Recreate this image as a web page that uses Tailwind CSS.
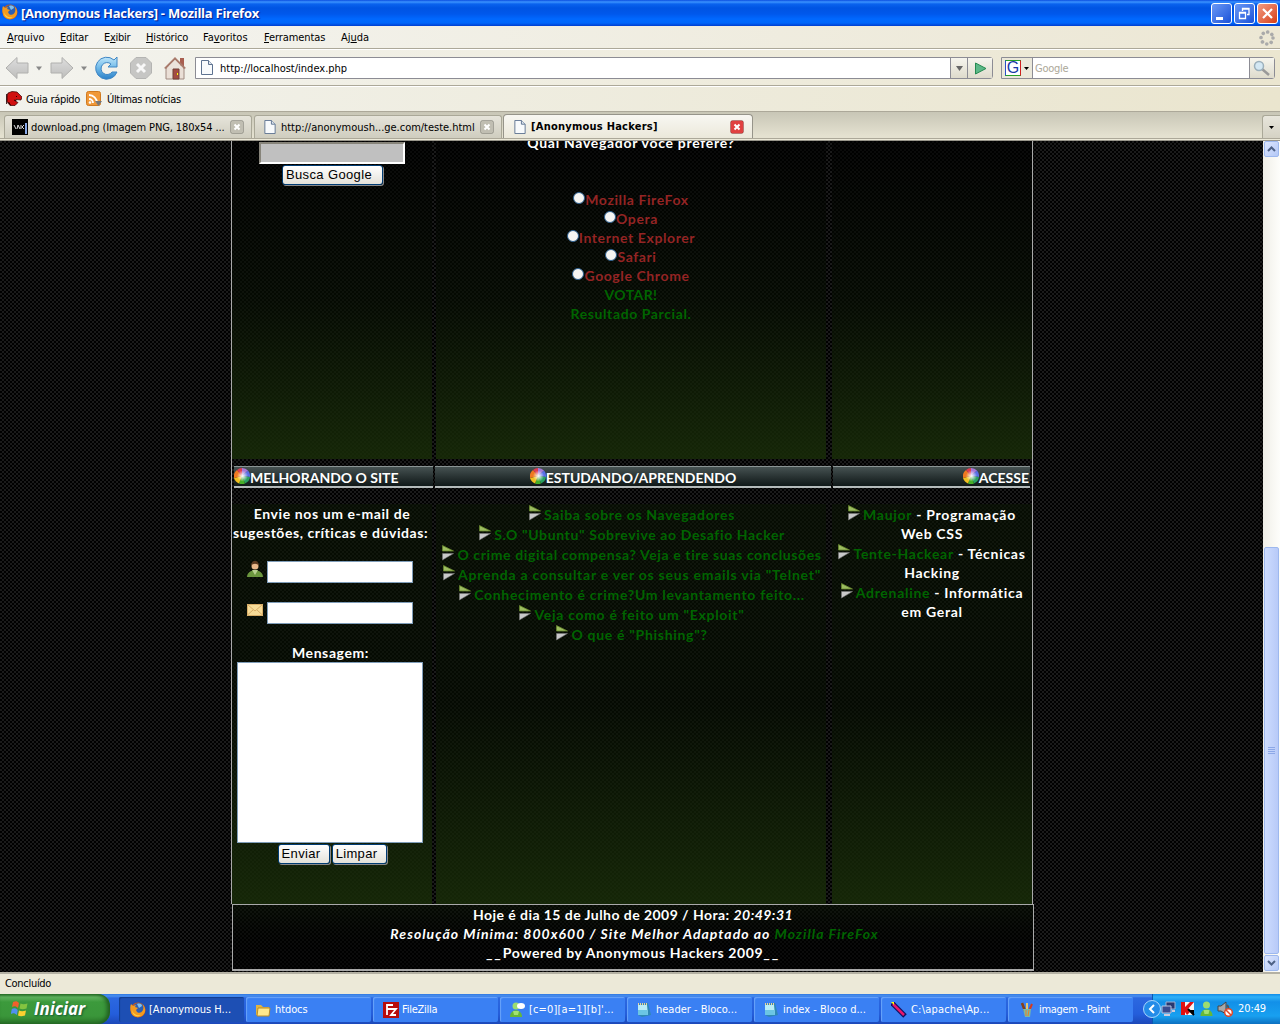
<!DOCTYPE html>
<html lang="pt-BR">
<head>
<meta charset="utf-8">
<title>[Anonymous Hackers] - Mozilla Firefox</title>
<script src="https://cdn.jsdelivr.net/npm/@tailwindcss/browser@4"></script>
</head>
<body class="w-[1280px] h-[1024px] overflow-hidden bg-black flex flex-col font-['DejaVu_Sans_Condensed','Noto_Sans',sans-serif] text-[11px] leading-[14px] text-black whitespace-nowrap">
<svg class="absolute w-0 h-0">
  <defs>
    <radialGradient id="shine"><stop offset="0" stop-color="#fff"/><stop offset=".25" stop-color="#fff" stop-opacity=".7"/><stop offset=".8" stop-color="#fff" stop-opacity="0"/></radialGradient>
    <linearGradient id="blue" x2="0" y2="1"><stop offset="0" stop-color="#bfe6fa"/><stop offset=".5" stop-color="#6fb9e8"/><stop offset="1" stop-color="#2a80c8"/></linearGradient>
    <linearGradient id="grey" x2="0" y2="1"><stop offset="0" stop-color="#dedede"/><stop offset="1" stop-color="#bdbdbb"/></linearGradient>
  </defs>
  <symbol id="arrow" viewBox="0 0 12 16"><path d="M0.5 .5L11.500 6H.5z" fill="#9cbc60" stroke="#66852c" stroke-width=".8"/><path d="M.5 8.500h11L.5 15z" fill="#c9c9c9" stroke="#777" stroke-width=".6"/></symbol>
  <symbol id="wheel" viewBox="0 0 16 16"><path d="M8 8V0A8 8 0 0 1 14 2.600z" fill="#a678d8"/><path d="M8 8l6-5.400A8 8 0 0 1 16 9z" fill="#5a6ee6"/><path d="M8 8l8 1a8 8 0 0 1-5 6.400z" fill="#28a060"/><path d="M8 8l3 7.400A8 8 0 0 1 5 15.400z" fill="#46ae28"/><path d="M8 8l-3 7.400A8 8 0 0 1 0 10z" fill="#f0c020"/><path d="M8 8L0 10A8 8 0 0 1 3 2z" fill="#f07820"/><path d="M8 8L3 2A8 8 0 0 1 8 0z" fill="#e03c50"/><circle cx="8.500" cy="8" r="7" fill="url(#shine)"/></symbol>
  <symbol id="fox" viewBox="0 0 16 16"><circle cx="8" cy="8" r="7.500" fill="#d65a0c"/><circle cx="8.500" cy="6.500" r="5.500" fill="#2c5fb4"/><path d="M7 2c3-1 5 0 5 2L9 6z" fill="#7ec0ee"/><path d="M1 2l2 2 3-1-1 2 3 1-2 2 1 2c3 2 5 0 6-2 1-3 0-5-1-6 4 3 4 8 1 11-4 4-11 2-12-3C0 7 0 4 1 2z" fill="#f39a1e"/><path d="M2 8c1 4 5 6 9 5-4 3-9 0-9-5z" fill="#fbd24b"/></symbol>
  <symbol id="page" viewBox="0 0 12 15"><path d="M.5.5h7l4 4v10H.5z" fill="#f8fafc" stroke="#5d7290"/><path d="M7.500.5v4h4" fill="#dfe6ee" stroke="#5d7290"/></symbol>
  <symbol id="close" viewBox="0 0 14 14"><rect x=".5" y=".5" width="13" height="13" rx="2" fill="currentColor" stroke="#0003"/><path d="M4.500 4.500l5 5m0-5l-5 5" stroke="#fff" stroke-width="2"/></symbol>
  <symbol id="note" viewBox="0 0 16 16"><path d="M2 2l10-1 3 12-9 2-4-2z" fill="#2f88b4"/><path d="M2 3h9l1 10H2z" fill="#b9ecf8"/><path d="M2 8h9.500l.5 5H2z" fill="#6bc5e4"/><path d="M2 2h10" stroke="#eed49a" stroke-width="2" stroke-dasharray="1 1"/></symbol>
  <symbol id="buddy" viewBox="0 0 14 16"><circle cx="7" cy="4" r="3.500" fill="#9cdc70"/><path d="M1 15c0-9 12-9 12 0z" fill="#66b838"/><path d="M4 9h6l-1 4H5z" fill="#a2e272"/></symbol>
</svg>

<!-- Title bar -->
<header class="h-[26px] shrink-0 flex items-center pl-[2px] pr-[2px] bg-linear-[180deg,#0a4de0_0,#3b93ff_2px,#0a62ee_4px,#0054e3_8px,#0058ec_14px,#0068ff_19px,#0066fa_23px,#003dcf_26px]">
  <svg class="w-4 h-4 mb-[3px]"><use href="#fox"/></svg>
  <h1 class="ml-[3px] font-['Open_Sans',sans-serif] font-bold text-[13px] tracking-[-0.27px] text-white [text-shadow:1px_1px_1px_#0a1883]">[Anonymous Hackers] - Mozilla Firefox</h1>
  <div class="ml-auto flex gap-[2px]">
    <span class="w-[21px] h-[21px] rounded-[3px] border border-white bg-linear-to-br from-[#6b98f5] to-[#1a50d8] flex items-end pl-1 pb-[3px]"><i class="w-[7px] h-[3px] bg-white"></i></span>
    <span class="w-[21px] h-[21px] rounded-[3px] border border-white bg-linear-to-br from-[#6b98f5] to-[#1a50d8]"><svg class="w-[19px] h-[19px]" fill="none" stroke="#fff" stroke-width="1.300"><path d="M7.500 7V4.500h6.500v6h-2M7 5h7"/><path d="M4.500 8.500v6h6v-6zM4.500 9h6"/></svg></span>
    <span class="w-[21px] h-[21px] rounded-[3px] border border-white bg-linear-to-br from-[#f09a80] to-[#d63a08]"><svg class="w-[19px] h-[19px]" stroke="#fff" stroke-width="2.200"><path d="M5 5l9 9m0-9l-9 9"/></svg></span>
  </div>
</header>

<!-- Menu bar -->
<nav class="h-[23px] shrink-0 border-b border-[#aca899] bg-linear-to-r from-[#f4f4f0] to-[#ece7d4] flex items-center pl-[7px] pr-[5px] pt-px">
  <span class="w-[53px] tracking-[-0.05px]"><u>A</u>rquivo</span><span class="w-[44px] tracking-[-0.2px]"><u>E</u>ditar</span><span class="w-[42px] tracking-[-0.3px]">E<u>x</u>ibir</span><span class="w-[57px] tracking-[-0.15px]"><u>H</u>istórico</span><span class="w-[61px]">Fa<u>v</u>oritos</span><span class="w-[77px] tracking-[-0.1px]"><u>F</u>erramentas</span><span>Aj<u>u</u>da</span>
  <svg class="ml-auto w-4 h-4" fill="none" stroke="#aaa" stroke-width="3.600" stroke-linecap="round"><circle cx="8" cy="8" r="6" stroke-dasharray="0.010 4.702"/></svg>
</nav>

<!-- Navigation toolbar -->
<div class="h-[37px] shrink-0 border-t border-t-white border-b border-b-[#aca899] bg-linear-to-r from-[#f3f3ee] to-[#ebe6d0] flex items-center pl-[5px] pr-[5px]">
  <svg class="w-[24px] h-[24px]" viewBox="0 0 24 24"><path d="M1 12L12 1.500V7h11v10H12v5.500z" fill="url(#grey)" stroke="#b0b0ae"/></svg>
  <svg class="w-[21px] h-[24px]"><path d="M7 10.500h6l-3 4z" fill="#888"/></svg>
  <svg class="w-[24px] h-[24px]" viewBox="0 0 24 24"><path d="M23 12L12 1.500V7H1v10h11v5.500z" fill="url(#grey)" stroke="#b0b0ae"/></svg>
  <svg class="w-[21px] h-[24px]"><path d="M7 10.500h6l-3 4z" fill="#888"/></svg>
  <svg class="w-[24px] h-[24px]" viewBox="0 0 24 24"><path d="M19 4l3-3v10H13l3-3a6 6 0 1 0 1 8h5A11 11 0 1 1 19 4z" fill="url(#blue)" stroke="#3f86c4"/></svg>
  <svg class="w-[24px] h-[24px] ml-[10px]" viewBox="0 0 24 24"><path d="M7 1.500h10L22.500 7v10L17 22.500H7L1.500 17V7z" fill="#c6c6c4" stroke="#b4b4b2"/><path d="M8 8l8 8m0-8l-8 8" stroke="#f8f8f8" stroke-width="3"/></svg>
  <svg class="w-[24px] h-[24px] ml-[10px]" viewBox="0 0 24 24"><path d="M17 2h4v8h-4z" fill="#a95f50"/><path d="M3 11h18v12H3z" fill="#eadfd6" stroke="#a08a80"/><path d="M12 1L1 12l2 1 9-9 9 9 2-1z" fill="#a97b6c"/><path d="M12 4l8 8H4z" fill="#ece4dc"/><path d="M10 13h6v10h-6z" fill="#a34b42" stroke="#714038"/><path d="M14 17h1v2h-1z" fill="#ff0"/></svg>
  <div class="ml-[8px] w-[798px] h-[22px] border border-[#8c8c94] rounded-r-[3px] bg-white flex items-center pl-[5px]">
    <svg class="w-[12px] h-[15px]"><use href="#page"/></svg>
    <span class="ml-[7px] pt-[2px]">http://localhost/index.php</span>
    <span class="ml-auto w-[17px] h-5 border-l border-[#8c8c94] bg-linear-to-b from-[#f6f5ee] to-[#dedbcc]"><svg class="w-4 h-5"><path d="M5 8h7l-3.500 5z" fill="#666"/></svg></span>
    <span class="w-[25px] h-5 border-l border-[#8c8c94] bg-linear-to-b from-[#f6f5ee] to-[#dedbcc]"><svg class="w-6 h-5"><path d="M7.500 5v11L18 10.500z" fill="#5cb888" stroke="#258a50"/></svg></span>
  </div>
  <div class="ml-[8px] w-[274px] h-[22px] border border-[#8c8c94] rounded-r-[3px] bg-white flex items-center">
    <span class="w-[31px] h-5 bg-[#ebe8da] border-r border-[#8c8c94] flex items-center"><b class="ml-[3px] w-4 h-4 bg-white border border-t-[#28a028] border-l-[#2a50c8] border-r-[#d02020] border-b-[#28a028] font-['Liberation_Sans',sans-serif] font-normal text-[16px] leading-[14px] text-[#1838a8] text-center">G</b><svg class="w-[10px] h-4"><path d="M3 7h5L5.500 10z"/></svg></span>
    <span class="ml-[2px] pt-[2px] tracking-[-0.25px] text-[#aca899]">Google</span>
    <span class="ml-auto w-[25px] h-5 border-l border-[#8c8c94] bg-linear-to-b from-[#f6f5ee] to-[#dedbcc]"><svg class="w-6 h-5"><path d="M12 11l7 6" stroke="#999" stroke-width="2.500"/><circle cx="9" cy="8" r="4.500" fill="#d4e8f4" stroke="#9cb0bc" stroke-width="1.500"/></svg></span>
  </div>
</div>

<!-- Bookmarks toolbar -->
<div class="h-[25px] shrink-0 border-t border-white bg-linear-to-r from-[#f2f2ec] to-[#eae5ce] flex items-center pl-[6px]">
  <svg class="w-[16px] h-[16px]" viewBox="0 0 16 16"><path d="M1 5l1-3 4-1.500 5 .5 5 5-1 3-5-.5 0 2 2 1-3 3-5 0-3-4z" fill="#d01010" stroke="#300" stroke-width=".7"/><path d="M.7 3v10M2.500 11l2 3M10 5l1 1M8 9l2 1" stroke="#200"/></svg>
  <span class="ml-[4px] pt-[2px] w-[60px] tracking-[-0.3px]">Guia rápido</span>
  <svg class="w-[17px] h-[16px]"><rect x=".5" y=".5" width="14" height="14" rx="2" fill="#f09838" stroke="#d07a20"/><path d="M3 8a4 4 0 0 1 4 4M3 4a8 8 0 0 1 8 8" fill="none" stroke="#fff" stroke-width="1.800"/><circle cx="4" cy="11.500" r="1.300" fill="#fff"/><path d="M9 10h7l-3.500 5z" fill="#777"/></svg>
  <span class="ml-[4px] pt-[2px] tracking-[-0.33px]">Últimas notícias</span>
</div>

<!-- Tab strip -->
<div class="h-[30px] shrink-0 border-t border-[#aca899] bg-linear-[180deg,#c8c6b6,#e4e1d0_24px] flex flex-col">
  <div class="h-[26px] flex items-end pl-[4px]">
    <div class="w-[248px] h-[23px] border border-b-0 border-[#aaa898] rounded-t-[3px] bg-linear-to-b from-[#e6e4da] to-[#cfcdbf] flex items-center pl-[7px] pr-[7px]">
      <svg class="w-[16px] h-[16px]"><path d="M0 0h16v16H0z"/><path d="M2 6l2 4M5 10l1-4 2 4m1-4v4m3-4l-2 2 2 2" stroke="#ddd" fill="none"/><path d="M14 4v11" stroke="#88a8e8" stroke-width="2"/></svg>
      <span class="ml-[3px] pt-px tracking-[-0.12px]">download.png (Imagem PNG, 180x54 ...</span>
      <svg class="ml-auto w-[14px] h-[14px] text-[#c0beb2]"><use href="#close"/></svg>
    </div>
    <div class="ml-[2px] w-[248px] h-[23px] border border-b-0 border-[#aaa898] rounded-t-[3px] bg-linear-to-b from-[#e6e4da] to-[#cfcdbf] flex items-center pl-[9px] pr-[7px]">
      <svg class="w-[12px] h-[14px]"><use href="#page"/></svg>
      <span class="ml-[5px] pt-px tracking-[-0.02px]">http://anonymoush...ge.com/teste.html</span>
      <svg class="ml-auto w-[14px] h-[14px] text-[#c0beb2]"><use href="#close"/></svg>
    </div>
    <div class="ml-[1px] w-[250px] h-[24px] border border-b-0 border-[#96948a] rounded-t-[4px] bg-linear-to-b from-[#f8f7f2] to-[#ebe8da] flex items-center pl-[10px] pr-[8px]">
      <svg class="w-[12px] h-[14px]"><use href="#page"/></svg>
      <b class="ml-[5px] pt-px tracking-[0.24px]">[Anonymous Hackers]</b>
      <svg class="ml-auto w-[14px] h-[14px] text-[#e04040]"><use href="#close"/></svg>
    </div>
    <div class="ml-auto w-[18px] h-[23px] border border-r-0 border-b-0 border-[#aaa898] rounded-tl-[3px] bg-linear-to-b from-[#e8e6dc] to-[#d5d2c4]"><svg class="w-4 h-5"><path d="M6 10h5l-2.500 3z"/></svg></div>
  </div>
  <div class="h-[3px] border-t border-[#aca899] bg-[#ece9d8] border-b border-b-[#98958a]"></div>
</div>

<!-- Page viewport -->
<div class="h-[831px] shrink-0 flex overflow-hidden font-['Lato',sans-serif] font-bold text-[14px] leading-[19px] tracking-[0.6px] text-white">
  <main class="w-[1263px] pl-[231px] bg-black bg-[radial-gradient(circle_at_1px_1px,#1b1b1b_0.7px,transparent_1px),radial-gradient(circle_at_3px_3px,#1b1b1b_0.7px,transparent_1px)] bg-size-[4px_4px]">
    <div class="w-[802px] h-[763px] border-x border-[#a9a9a9] flex flex-col">
      <div class="flex h-[318px] text-center">
        <section class="w-[200px] mr-[4px] bg-linear-[180deg,#000000a0,#070f03a8_50%,#182c08dd] flex flex-col items-center">
          <div class="mt-[1px] w-[146px] h-[22px] bg-[#c0c0c0] border-2 border-t-[#87847a] border-l-[#87847a] border-b-white border-r-white"></div>
          <button class="mt-[1px] w-[101px] h-[20px] rounded-[3px] border border-[#003c74] bg-linear-to-b from-white to-[#e4e2da] shadow-[1px_1px_0_#888] font-['Liberation_Sans',sans-serif] font-normal text-[13px] leading-[18px] tracking-[0.37px] text-black pr-[6px]">Busca Google</button>
        </section>
        <section class="w-[390px] mr-[6px] bg-linear-[180deg,#000000a0,#070f03a8_50%,#182c08dd] flex flex-col items-center text-[#942424]">
          <p class="-mt-[8px] mb-[38px] text-white tracking-[0.7px]">Qual Navegador você prefere?</p>
          <label class="flex"><i class="mt-[2px] w-3 h-3 rounded-full bg-[#f6f5f2] border border-[#2c5f90]"></i>Mozilla FireFox</label>
          <label class="flex"><i class="mt-[2px] w-3 h-3 rounded-full bg-[#f6f5f2] border border-[#2c5f90]"></i>Opera</label>
          <label class="flex"><i class="mt-[2px] w-3 h-3 rounded-full bg-[#f6f5f2] border border-[#2c5f90]"></i>Internet Explorer</label>
          <label class="flex"><i class="mt-[2px] w-3 h-3 rounded-full bg-[#f6f5f2] border border-[#2c5f90]"></i>Safari</label>
          <label class="flex"><i class="mt-[2px] w-3 h-3 rounded-full bg-[#f6f5f2] border border-[#2c5f90]"></i>Google Chrome</label>
          <a class="text-[#006400] tracking-[0.4px]">VOTAR!</a>
          <a class="text-[#006400]">Resultado Parcial.</a>
        </section>
        <section class="w-[200px] bg-linear-[180deg,#000000a0,#070f03a8_50%,#182c08dd]"></section>
      </div>
      <div class="mt-[7px] h-[22px] flex pl-[2px] leading-[21px] tracking-normal">
        <h2 class="w-[199px] mr-[2px] flex border-t border-b-2 border-t-[#8a9494] border-b-[#b4baba] bg-linear-to-b from-[#465252] to-[#101818]"><svg class="w-4 h-4 mt-[1px]"><use href="#wheel"/></svg><span>MELHORANDO O SITE</span></h2>
        <h2 class="w-[396px] mr-[2px] flex justify-center border-t border-b-2 border-t-[#8a9494] border-b-[#b4baba] bg-linear-to-b from-[#465252] to-[#101818]"><svg class="w-4 h-4 mt-[1px]"><use href="#wheel"/></svg><span>ESTUDANDO/APRENDENDO</span></h2>
        <h2 class="w-[197px] flex justify-end pr-[1px] border-t border-b-2 border-t-[#8a9494] border-b-[#b4baba] bg-linear-to-b from-[#465252] to-[#101818]"><svg class="w-4 h-4 mt-[1px]"><use href="#wheel"/></svg><span>ACESSE</span></h2>
      </div>
      <div class="mt-[16px] flex h-[400px] text-center">
        <section class="w-[200px] mr-[4px] bg-linear-[180deg,#0a1404a0,#070f03a8_50%,#182c08dd] flex flex-col items-center">
          <p class="w-full">Envie nos um e-mail de</p>
          <p class="w-full pr-[3px] tracking-[0.55px]">sugestões, críticas e dúvidas:</p>
          <div class="mt-[19px] flex self-start ml-[15px] gap-[4px]"><svg class="w-4 h-4" viewBox="0 0 16 16"><path d="M0 16c0-9 16-9 16 0z" fill="#6b963e"/><path d="M5 9h6l-3 5z" fill="#b8d090"/><circle cx="8" cy="5" r="3.500" fill="#e8b88a"/><path d="M4 5c0-7 8-7 8 0-2-3-6-3-8 0z" fill="#5a3a20"/></svg><i class="w-[146px] h-[22px] bg-white border border-[#7f9db9]"></i></div>
          <div class="mt-[19px] flex self-start ml-[15px] gap-[4px]"><svg class="w-4 h-4" viewBox="0 0 16 16"><path d="M0 2h16v12H0z" fill="#f7dc98"/><path d="M.5 2.500L8 9l7.500-6.500M.5 13L6 8m9.500 5L10 8M.5 2.500h15v11H.5z" fill="none" stroke="#d8ae68"/></svg><i class="w-[146px] h-[22px] bg-white border border-[#7f9db9]"></i></div>
          <p class="mt-[19px] pr-[3px]">Mensagem:</p>
          <div class="self-start ml-[5px] w-[186px] h-[181px] bg-white border border-[#7f9db9]"></div>
          <div class="mt-[1px] flex gap-[2px] self-start ml-[46px] font-['Liberation_Sans',sans-serif] font-normal text-[13px] leading-[18px] tracking-[0.33px] text-black">
            <button class="w-[52px] h-[20px] rounded-[3px] border border-[#003c74] bg-linear-to-b from-white to-[#e4e2da] shadow-[1px_1px_0_#888] pr-[6px]">Enviar</button>
            <button class="w-[55px] h-[20px] rounded-[3px] border border-[#003c74] bg-linear-to-b from-white to-[#e4e2da] shadow-[1px_1px_0_#888] pr-[6px]">Limpar</button>
          </div>
        </section>
        <section class="w-[390px] mr-[6px] bg-linear-[180deg,#0a1404a0,#070f03a8_50%,#182c08dd] flex flex-col items-center text-[#006400] leading-[20px] pt-[1px] pl-[2px]">
          <a class="flex gap-[3px] tracking-[0.67px]"><svg class="w-3 h-4"><use href="#arrow"/></svg>Saiba sobre os Navegadores</a>
          <a class="flex gap-[3px] tracking-[0.62px]"><svg class="w-3 h-4"><use href="#arrow"/></svg>S.O "Ubuntu" Sobrevive ao Desafio Hacker</a>
          <a class="flex gap-[3px] tracking-[0.62px]"><svg class="w-3 h-4"><use href="#arrow"/></svg>O crime digital compensa? Veja e tire suas conclusões</a>
          <a class="flex gap-[3px] tracking-[0.75px]"><svg class="w-3 h-4"><use href="#arrow"/></svg>Aprenda a consultar e ver os seus emails via "Telnet"</a>
          <a class="flex gap-[3px] tracking-[0.7px]"><svg class="w-3 h-4"><use href="#arrow"/></svg>Conhecimento é crime?Um levantamento feito...</a>
          <a class="flex gap-[3px] tracking-[0.7px]"><svg class="w-3 h-4"><use href="#arrow"/></svg>Veja como é feito um "Exploit"</a>
          <a class="flex gap-[3px] tracking-[0.7px]"><svg class="w-3 h-4"><use href="#arrow"/></svg>O que é "Phishing"?</a>
        </section>
        <section class="w-[200px] bg-linear-[180deg,#0a1404a0,#070f03a8_50%,#182c08dd] flex flex-col items-center pt-[1px] tracking-[0.7px]">
          <p class="flex h-[19px] leading-5"><svg class="w-3 h-4 mr-[3px]"><use href="#arrow"/></svg><a class="text-[#006400]">Maujor</a>&nbsp;- Programação</p><p class="mb-px">Web CSS</p>
          <p class="flex h-[19px] leading-5"><svg class="w-3 h-4 mr-[3px]"><use href="#arrow"/></svg><a class="text-[#006400]">Tente-Hackear</a>&nbsp;- Técnicas</p><p class="mb-px">Hacking</p>
          <p class="flex h-[19px] leading-5"><svg class="w-3 h-4 mr-[3px]"><use href="#arrow"/></svg><a class="text-[#006400]">Adrenaline</a>&nbsp;- Informática</p><p>em Geral</p>
        </section>
      </div>
    </div>
    <footer class="ml-[1px] w-[802px] h-[67px] border border-b-2 border-[#a9a9a9] bg-linear-to-b from-[#0a1205]/60 to-black/60 text-center">
      <p class="tracking-[0.45px]">Hoje é dia 15 de Julho de 2009 / Hora: <em>20:49:31</em></p>
      <p class="italic pl-[3px] tracking-[1.03px]">Resolução Mínima: 800x600 / Site Melhor Adaptado ao <a class="text-[#006400]">Mozilla FireFox</a></p>
      <p><span class="tracking-[1.900px]">__</span>Powered by Anonymous Hackers 2009<span class="tracking-[1.900px]">__</span></p>
    </footer>
  </main>
  <!-- Scrollbar -->
  <aside class="w-[17px] bg-linear-to-r from-[#f0efe8] to-[#fefefb] flex flex-col items-center">
    <span class="w-[15px] h-[16px] rounded-[2px] border border-[#9db8ee] bg-linear-to-br from-[#dce6fe] to-[#b4c8f6]"><svg class="w-[13px] h-[14px]"><path d="M3 9l3.500-3.500L10 9" fill="none" stroke="#4d6185" stroke-width="2"/></svg></span>
    <span class="mt-[390px] w-[15px] h-[407px] rounded-[2px] border border-[#9db8ee] bg-linear-to-r from-[#cddcfe] to-[#b8caf8] flex flex-col justify-center items-center gap-px"><i class="w-[7px] h-px bg-[#8ca8e8]"></i><i class="w-[7px] h-px bg-[#8ca8e8]"></i><i class="w-[7px] h-px bg-[#8ca8e8]"></i><i class="w-[7px] h-px bg-[#8ca8e8]"></i></span>
    <span class="mt-[1px] w-[15px] h-[16px] rounded-[2px] border border-[#9db8ee] bg-linear-to-br from-[#dce6fe] to-[#b4c8f6]"><svg class="w-[13px] h-[14px]"><path d="M3 5l3.500 3.500L10 5" fill="none" stroke="#4d6185" stroke-width="2"/></svg></span>
  </aside>
</div>

<!-- Status bar -->
<div class="h-[22px] shrink-0 border-t-2 border-[#b4b1a4] bg-[#ece9d8] flex items-center pl-[5px] tracking-[-0.3px]">Concluído</div>

<!-- Taskbar -->
<footer class="h-[30px] shrink-0 bg-linear-[180deg,#3078e0_0,#4a90f0_2px,#2c68e0_4px,#245edb_20px,#1c48b8_30px] flex text-white">
  <div class="w-[110px] h-[30px] rounded-r-[12px] bg-linear-[180deg,#2c7a2c_0,#62b460_3px,#3c9a3c_8px,#3a963a_22px,#2a7428_30px] shadow-[inset_-3px_0_4px_#1f5c20] flex items-center pl-[11px]">
    <svg class="w-[18px] h-[18px]" viewBox="0 0 18 18"><path d="M2 2c3-1 4-1 6 1L7 8C5 6 3 6 1 7z" fill="#f0602c"/><path d="M9.500 3.500c2 1 4 1 7 0l-1 5c-3 1-5 1-7 0z" fill="#84c440"/><path d="M.8 9c2-1 4-1 6 1l-1 5c-2-2-4-2-6-1z" fill="#5090f0"/><path d="M8 10.500c2 1 4 1 7 0l-1 5c-3 1-5 1-7 0z" fill="#fcd030"/></svg>
    <b class="ml-[5px] italic font-['Open_Sans',sans-serif] text-[17px] [text-shadow:1px_1px_2px_#153]">Iniciar</b>
  </div>
  <div class="ml-[9px] flex gap-[2px] pt-[3px]">
    <div class="w-[125px] h-[25px] rounded-[2px] bg-[#1d4fb4] shadow-[inset_1px_1px_1px_#123c90] flex items-center pl-[11px] pt-px gap-[3px]"><svg class="w-4 h-4"><use href="#fox"/></svg>[Anonymous H...</div>
    <div class="w-[125px] h-[25px] rounded-[2px] bg-[#3a80f3] shadow-[inset_1px_1px_1px_#6aa4fa] flex items-center pl-[9px] gap-[4px] tracking-[-0.1px]"><svg class="w-4 h-4"><path d="M1 3h5l2 2h6v8H1z" fill="#dfb444"/><path d="M3 6h12l-1 8H2z" fill="#ffe88c" stroke="#b88c28"/></svg>htdocs</div>
    <div class="w-[125px] h-[25px] rounded-[2px] bg-[#3a80f3] shadow-[inset_1px_1px_1px_#6aa4fa] flex items-center pl-[10px] gap-[3px] tracking-[-0.25px]"><svg class="w-4 h-4"><path d="M0 0h16v16H0z" fill="#b80c0c"/><path d="M4 13V3h6M4 7h5m0 0h4l-5 6h5" fill="none" stroke="#fff" stroke-width="1.800"/></svg>FileZilla</div>
    <div class="w-[125px] h-[25px] rounded-[2px] bg-[#3a80f3] shadow-[inset_1px_1px_1px_#6aa4fa] flex items-center pl-[9px] gap-[4px] tracking-[0.15px]"><svg class="w-4 h-4"><use href="#buddy" width="14" height="16"/><ellipse cx="12" cy="4" rx="4" ry="3" fill="#fff"/></svg>[c=0][a=1][b]'...</div>
    <div class="w-[125px] h-[25px] rounded-[2px] bg-[#3a80f3] shadow-[inset_1px_1px_1px_#6aa4fa] flex items-center pl-[9px] gap-[4px]"><svg class="w-4 h-4"><use href="#note"/></svg>header - Bloco...</div>
    <div class="w-[125px] h-[25px] rounded-[2px] bg-[#3a80f3] shadow-[inset_1px_1px_1px_#6aa4fa] flex items-center pl-[9px] gap-[4px]"><svg class="w-4 h-4"><use href="#note"/></svg>index - Bloco d...</div>
    <div class="w-[125px] h-[25px] rounded-[2px] bg-[#3a80f3] shadow-[inset_1px_1px_1px_#6aa4fa] flex items-center pl-[10px] gap-[4px] tracking-[0.2px]"><svg class="w-4 h-4"><path d="M1 1l13 13" stroke="#101060" stroke-width="5"/><path d="M2 2l11 11" stroke="#e8186c" stroke-width="2.500"/><path d="M0 0h3v3z" fill="#ff0"/></svg>C:\apache\Ap...</div>
    <div class="w-[125px] h-[25px] rounded-[2px] bg-[#3a80f3] shadow-[inset_1px_1px_1px_#6aa4fa] flex items-center pl-[11px] gap-[4px] tracking-[-0.3px]"><svg class="w-4 h-4"><path d="M3 1l3 8" stroke="#884018" stroke-width="2.500"/><path d="M8 1v8" stroke="#e8c870" stroke-width="2"/><path d="M13 2l-3 7" stroke="#d43c20" stroke-width="2"/><path d="M4 7h8l-1 8H6z" fill="#78b8a8"/><path d="M7 8v6m3-6l-1 6" stroke="#f08020"/></svg>imagem - Paint</div>
  </div>
  <div class="relative ml-auto w-[128px] h-[30px] bg-linear-[180deg,#108ce8_0,#30b0f8_3px,#1290e8_8px,#18a0f0_22px,#0c70c0_30px] border-l border-[#0a58b0] flex items-center pl-[8px] gap-[3px]">
    <svg class="absolute -left-[10px] top-[6px] w-[18px] h-[18px]"><circle cx="9" cy="9" r="8.500" fill="#248ce8" stroke="#a8d4fc"/><path d="M11 5L7 9l4 4" fill="none" stroke="#fff" stroke-width="2"/></svg>
    <svg class="w-4 h-4"><path d="M5 1h9v7H5z" fill="#283870" stroke="#a0b0d0"/><path d="M1 5h9v7H1z" fill="#384c90" stroke="#b8c4e0"/><path d="M3 14h6M11 10h3" stroke="#ccd" stroke-width="2"/></svg>
    <svg class="w-4 h-4"><path d="M1 1h13v13H1z" fill="#f4f4f4"/><path d="M1 1h4v5l5-5h4L8 8l2 3-3 3-2-3v3H1z" fill="#e01010"/><path d="M9 9h5v5z"/><path d="M8 8l6 6" stroke="#000" stroke-width="2"/></svg>
    <svg class="w-[15px] h-4"><use href="#buddy"/></svg>
    <svg class="w-4 h-4"><path d="M1 5h3l5-4v12l-5-3H1z" fill="#a8a8a8" stroke="#444"/><path d="M10 4c2 2 2 5 0 7" stroke="#555" fill="none" stroke-width="2"/><circle cx="11.500" cy="11.500" r="3.800" fill="#fff" stroke="#e04828" stroke-width="1.500"/><path d="M9 9l5 5" stroke="#e04828" stroke-width="1.500"/></svg>
    <span class="ml-[2px] tracking-[-0.1px]">20:49</span>
  </div>
</footer>
</body>
</html>
